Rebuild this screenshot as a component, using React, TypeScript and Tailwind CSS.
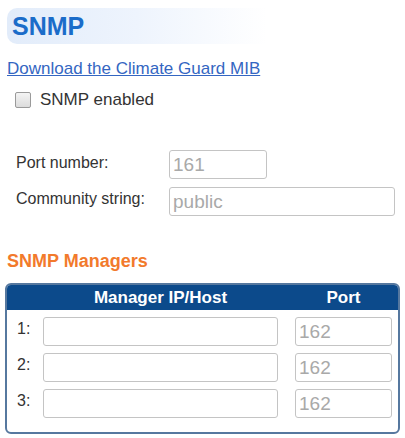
const managers = [1, 2, 3];

function Field({ value, className }: { value: string; className: string }) {
  return (
    <div
      className={`h-[29px] rounded-[3px] border border-[#c4c4c4] bg-white px-[3px] text-[19px] leading-[27px] text-[#a9a9a9] ${className}`}
    >
      {value}
    </div>
  );
}

export default function App() {
  return (
    <div className="h-[438px] w-[405px] overflow-hidden bg-white font-['Liberation_Sans',Arial,sans-serif] text-[#333]">
      {/* page title band */}
      <div className="ml-[7px] mt-[8px] h-[36px] w-[260px] rounded-l-[10px] bg-gradient-to-r from-[#e2ecfa] via-[#eef4fd] to-white pl-[5px] text-[25px] font-bold leading-[36px] text-[#1b6cc9]">
        SNMP
      </div>

      <div className="ml-[7px] mt-[15px] text-[17px] leading-[20px]">
        <a href="#" className="text-[#3466c2] underline">
          Download the Climate Guard MIB
        </a>
      </div>

      <label className="ml-[15px] mt-[11px] flex h-[20px] items-center gap-[9px] text-[17px]">
        <span className="block h-[16px] w-[16px] rounded-[2px] border border-[#9a9a9a] bg-gradient-to-b from-[#f4f4f4] to-[#dcdcdc]" />
        <span>SNMP enabled</span>
      </label>

      <div className="ml-[16px] mt-[40px] flex flex-col gap-[8px] text-[16px]">
        <div className="flex items-center">
          <span className="w-[153px] -translate-y-[2px]">Port number:</span>
          <Field value="161" className="w-[98px]" />
        </div>
        <div className="flex items-center">
          <span className="w-[153px] -translate-y-[3px]">Community string:</span>
          <Field value="public" className="w-[226px]" />
        </div>
      </div>

      <div className="ml-[7px] mt-[34px] text-[18px] font-bold leading-[22px] text-[#f27a2c]">
        SNMP Managers
      </div>

      <div className="ml-[5px] mt-[11px] h-[151px] w-[395px] overflow-hidden rounded-[6px] border-2 border-[#56789f]">
        <div className="flex h-[25px] items-center bg-[#0c4a8b] text-[17px] font-bold text-white">
          <span className="ml-[36px] w-[235px] text-center">Manager IP/Host</span>
          <span className="ml-[17px] w-[97px] text-center">Port</span>
        </div>
        <div className="mt-[7px] flex flex-col gap-[7px]">
          {managers.map((n) => (
            <div key={n} className="flex items-start">
              <span className="ml-[10px] w-[26px] pt-[2px] text-[16px] leading-[20px]">{n}:</span>
              <Field value="" className="w-[235px]" />
              <Field value="162" className="ml-[17px] w-[97px]" />
            </div>
          ))}
        </div>
      </div>
    </div>
  );
}
